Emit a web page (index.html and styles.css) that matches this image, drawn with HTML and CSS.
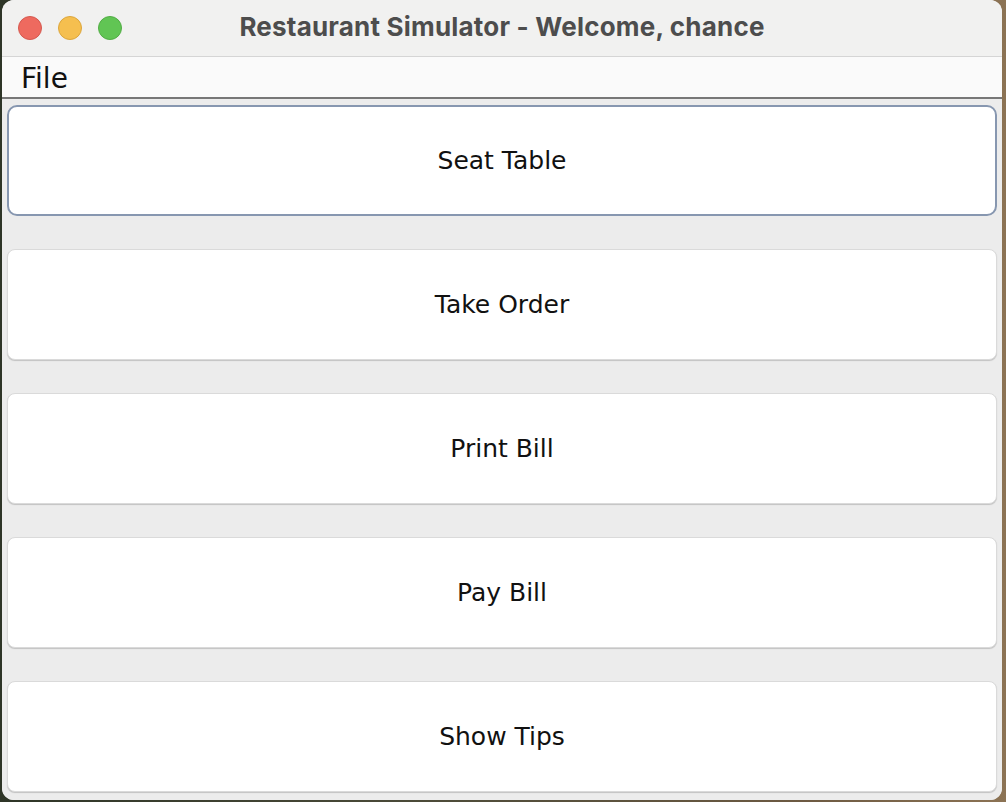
FILE: index.html
```html
<!DOCTYPE html>
<html>
<head>
<meta charset="utf-8">
<link rel="stylesheet" href="styles.css">
</head>
<body>
<div class="window">
  <div class="titlebar">
    <div class="lights">
      <span class="light red"></span>
      <span class="light yellow"></span>
      <span class="light green"></span>
    </div>
    <div class="title">Restaurant Simulator - Welcome, chance</div>
  </div>
  <div class="menubar"><span class="menu">File</span></div>
  <div class="content">
    <button class="btn focused">Seat Table</button>
    <button class="btn">Take Order</button>
    <button class="btn">Print Bill</button>
    <button class="btn">Pay Bill</button>
    <button class="btn">Show Tips</button>
  </div>
</div>
</body>
</html>
```
FILE: styles.css
```css
html, body {
  margin: 0;
  padding: 0;
}
body {
  width: 1006px;
  height: 802px;
  overflow: hidden;
  background: linear-gradient(to right, #2e3527 0%, #4a4a38 40%, #6d5a42 80%, #8c7354 100%);
}
.window {
  width: 1000px;
  height: 800px;
  margin-left: 2px;
  border-radius: 12px;
  overflow: hidden;
  background: #ececec;
  display: flex;
  flex-direction: column;
}
.titlebar {
  height: 56px;
  flex: 0 0 56px;
  background: #f1f1f0;
  border-bottom: 1px solid #d5d5d5;
  position: relative;
  display: flex;
  align-items: center;
  justify-content: center;
}
.lights {
  position: absolute;
  left: 16px;
  top: 16px;
  display: flex;
  gap: 16px;
}
.light {
  width: 24px;
  height: 24px;
  border-radius: 50%;
  box-sizing: border-box;
}
.red { background: #ee6a5f; border: 1px solid #d5594f; }
.yellow { background: #f5bf4f; border: 1px solid #dca63c; }
.green { background: #61c554; border: 1px solid #52ad45; }
.title {
  font-family: Inter, "Liberation Sans", sans-serif;
  font-weight: 700;
  font-size: 26px;
  letter-spacing: 0.2px;
  color: #4d4d4d;
  margin-top: -4px;
}
.menubar {
  height: 40px;
  flex: 0 0 40px;
  background: #fafafa;
  border-bottom: 2px solid #777777;
  display: flex;
  align-items: center;
  padding-left: 19px;
}
.menu {
  font-family: "DejaVu Sans", sans-serif;
  font-size: 28px;
  color: #111;
  margin-top: 2px;
}
.content {
  flex: 1;
  display: flex;
  flex-direction: column;
  gap: 33px;
  padding: 6px 5px 8px 5px;
  background: #ececec;
}
.btn {
  height: 111px;
  flex: 0 0 111px;
  width: 100%;
  background: #ffffff;
  border: 1px solid #dadada;
  border-radius: 8px;
  box-shadow: 0 1px 1px rgba(0,0,0,0.18);
  font-family: "DejaVu Sans", sans-serif;
  font-size: 25px;
  color: #111;
  padding: 0;
  margin: 0;
}
.btn.focused {
  border: 2px solid #8797b0;
  border-radius: 10px;
  box-shadow: none;
}
```
